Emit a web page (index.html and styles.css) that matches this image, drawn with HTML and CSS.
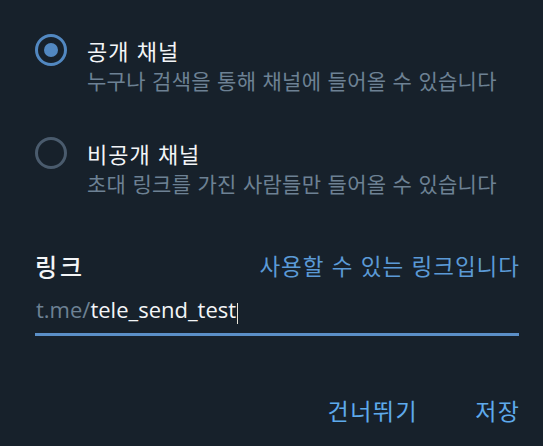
FILE: index.html
```html
<!DOCTYPE html>
<html lang="ko">
<head>
<meta charset="utf-8">
<link rel="stylesheet" href="styles.css">
</head>
<body>
<div class="page">
  <div class="option">
    <span class="radio radio-on"><span class="dot"></span></span>
    <div class="texts">
      <div class="title">공개 채널</div>
      <div class="sub">누구나 검색을 통해 채널에 들어올 수 있습니다</div>
    </div>
  </div>
  <div class="option option-2">
    <span class="radio"></span>
    <div class="texts">
      <div class="title">비공개 채널</div>
      <div class="sub">초대 링크를 가진 사람들만 들어올 수 있습니다</div>
    </div>
  </div>
  <div class="link-head">
    <span class="link-label">링크</span>
    <span class="link-status">사용할 수 있는 링크입니다</span>
  </div>
  <div class="field">
    <span class="prefix">t.me/</span><span class="value">tele_send_test</span><span class="cursor"></span>
  </div>
  <div class="actions">
    <span class="btn">건너뛰기</span>
    <span class="btn">저장</span>
  </div>
</div>
</body>
</html>
```
FILE: styles.css
```css
html, body {
  margin: 0;
  padding: 0;
  background: #17212b;
}
body {
  width: 543px;
  height: 446px;
  overflow: hidden;
  font-family: "Noto Sans CJK KR", "Open Sans", sans-serif;
  color: #f3f5f7;
}
.page {
  padding: 34px 24px 0 35px;
}
.option {
  display: flex;
  align-items: flex-start;
  gap: 20px;
}
.option-2 {
  margin-top: 43px;
}
.radio {
  box-sizing: border-box;
  width: 32px;
  height: 32px;
  border-radius: 50%;
  border: 3px solid #4a5b6d;
  display: flex;
  align-items: center;
  justify-content: center;
  flex: none;
}
.radio-on {
  border-color: #5288c1;
}
.dot {
  width: 14px;
  height: 14px;
  border-radius: 50%;
  background: #5288c1;
}
.title {
  font-size: 22px;
  letter-spacing: 1px;
  line-height: 32px;
  color: #f3f5f7;
}
.sub {
  font-size: 21px;
  letter-spacing: 0.3px;
  line-height: 28px;
  color: #6d8194;
}
.link-head {
  margin-top: 52px;
  display: flex;
  justify-content: space-between;
  align-items: center;
  height: 32px;
}
.link-label {
  font-size: 24px;
  letter-spacing: 3px;
  font-weight: 500;
  color: #f3f5f7;
}
.link-status {
  font-size: 22.5px;
  letter-spacing: 1px;
  margin-right: -1px;
  color: #5b9ad6;
}
.field {
  margin-top: 14px;
  height: 38px;
  border-bottom: 3px solid #5b8fc7;
  display: flex;
  align-items: flex-start;
  font-family: "Open Sans", "Noto Sans CJK KR", sans-serif;
  font-size: 22px;
  line-height: 28px;
}
.prefix {
  color: #6d8194;
  margin-left: 1px;
}
.value {
  color: #f3f5f7;
}
.cursor {
  width: 1px;
  height: 21px;
  margin-top: 8px;
  background: #e8e4d8;
  margin-left: 1px;
}
.actions {
  margin-top: 58px;
  display: flex;
  justify-content: flex-end;
  gap: 57px;
  line-height: 32px;
}
.btn {
  font-size: 23px;
  letter-spacing: 1.5px;
  color: #5eaaec;
}
.btn:last-child {
  margin-right: -1.5px;
}
```
